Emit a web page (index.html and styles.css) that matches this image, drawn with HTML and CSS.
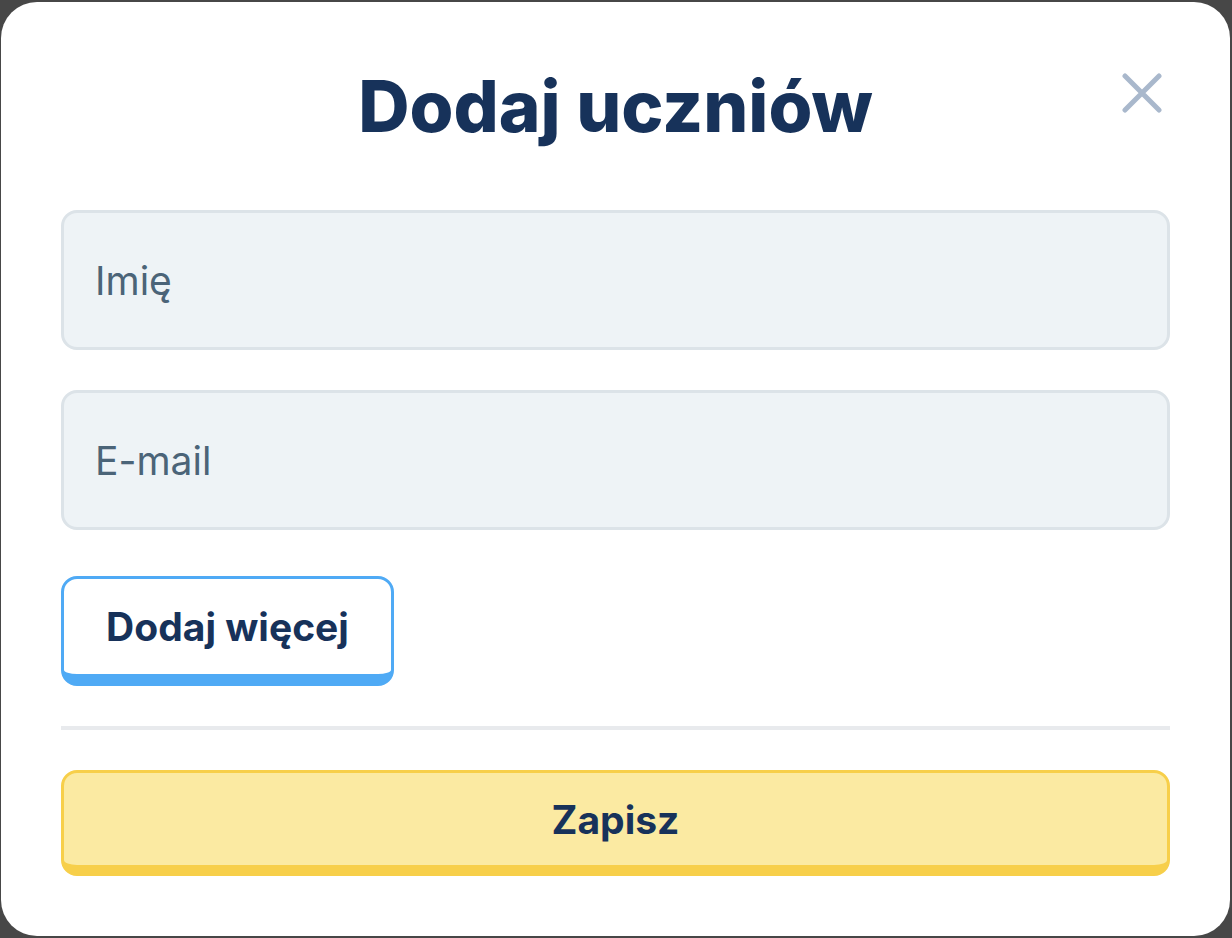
FILE: index.html
```html
<!DOCTYPE html>
<html lang="pl">
<head>
<meta charset="utf-8">
<title>Dodaj uczniów</title>
<link rel="stylesheet" href="styles.css">
</head>
<body>
<div class="backdrop">
  <div class="modal">
    <header class="modal-header">
      <h1 class="modal-title">Dodaj uczniów</h1>
      <button class="close-btn" aria-label="Zamknij">
        <svg width="40" height="40" viewBox="0 0 40 40"><path d="M3 3 L37 37 M37 3 L3 37" stroke="#a9b8cc" stroke-width="5" stroke-linecap="round" fill="none"/></svg>
      </button>
    </header>
    <div class="fields">
      <div class="field"><span class="placeholder">Imię</span></div>
      <div class="field"><span class="placeholder">E-mail</span></div>
    </div>
    <button class="btn-more">Dodaj więcej</button>
    <hr class="divider">
    <button class="btn-save">Zapisz</button>
  </div>
</div>
</body>
</html>
```

FILE: styles.css
```css
* { box-sizing: border-box; }
html, body { margin: 0; padding: 0; }
body {
  background: #474747;
  font-family: "Inter", "Noto Sans", sans-serif;
  width: 1232px;
  height: 938px;
  overflow: hidden;
}
.backdrop {
  padding: 2px 2px 2px 1px;
}
.modal {
  background: #ffffff;
  border-radius: 36px;
  width: 1229px;
  height: 934px;
  padding: 0 60px 60px 60px;
  display: flex;
  flex-direction: column;
}
.modal-header {
  height: 208px;
  position: relative;
  display: flex;
  justify-content: center;
  padding-top: 68px;
}
.modal-title {
  margin: 0;
  font-size: 71px;
  line-height: 72px;
  font-weight: 800;
  color: #17325a;
  letter-spacing: 0;
}
.close-btn {
  position: absolute;
  right: 8px;
  top: 71px;
  width: 40px;
  height: 40px;
  padding: 0;
  border: 0;
  background: none;
}
.close-btn svg { display: block; }
.fields {
  display: flex;
  flex-direction: column;
  gap: 40px;
}
.field {
  height: 140px;
  background: #eef3f6;
  border: 3px solid #dce3e8;
  border-radius: 16px;
  display: flex;
  align-items: center;
  padding-left: 31px;
}
.placeholder {
  font-size: 39px;
  color: #4b6478;
  font-weight: 400;
}
.btn-more {
  margin-top: 46px;
  align-self: flex-start;
  width: 333px;
  height: 110px;
  background: #ffffff;
  border: 3px solid #4faaf5;
  border-bottom-width: 12px;
  border-radius: 16px;
  font-family: inherit;
  font-size: 39px;
  font-weight: 700;
  color: #17325a;
  padding: 0;
}
.divider {
  margin: 40px 0 0 0;
  border: 0;
  height: 4px;
  background: #e8eaed;
}
.btn-save {
  margin-top: 40px;
  width: 100%;
  height: 106px;
  background: #fbeaa2;
  border: 3px solid #f7cf4a;
  border-bottom-width: 11px;
  border-radius: 16px;
  font-family: inherit;
  font-size: 39px;
  font-weight: 700;
  color: #17325a;
  padding: 0;
}
```
